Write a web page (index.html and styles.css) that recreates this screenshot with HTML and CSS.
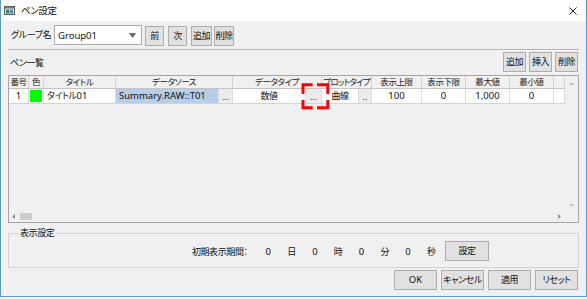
FILE: index.html
```html
<!DOCTYPE html>
<html lang="ja">
<head>
<meta charset="utf-8">
<title>ペン設定</title>
<link rel="stylesheet" href="styles.css">
</head>
<body>
<div class="window">
  <div class="titlebar">
    <svg class="app-icon" width="11" height="9" viewBox="0 0 11 9">
      <rect x="0.5" y="0.5" width="10" height="8" fill="#e4e4e4" stroke="#5a5a5a"/>
      <rect x="1" y="1" width="9" height="1.5" fill="#7a7a7a"/>
      <rect x="2" y="3.5" width="3" height="4" fill="#2f8a5a"/>
      <rect x="5.5" y="3.5" width="3.5" height="4" fill="#4a8ad0"/>
    </svg>
    <span class="title">ペン設定</span>
    <svg class="close" width="8" height="8" viewBox="0 0 8 8">
      <path d="M0.5,0.5 L7.5,7.5 M7.5,0.5 L0.5,7.5" stroke="#222" stroke-width="1" fill="none"/>
    </svg>
  </div>

  <div class="content">
    <div class="group-row">
      <span class="group-label">グループ名</span>
      <div class="combo">
        <span class="lat">Group01</span>
        <svg class="combo-arrow" width="7" height="5" viewBox="0 0 7 5"><path d="M0,0 H7 L3.5,5 Z" fill="#666"/></svg>
      </div>
      <button class="btn btn-prev">前</button>
      <button class="btn btn-next">次</button>
      <button class="btn btn-add">追加</button>
      <button class="btn btn-del">削除</button>
    </div>

    <div class="sep"></div>

    <div class="list-row">
      <span class="list-label">ペン一覧</span>
      <div class="list-btns">
        <button class="btn btn-small">追加</button>
        <button class="btn btn-small">挿入</button>
        <button class="btn btn-small">削除</button>
      </div>
    </div>

    <div class="grid">
      <div class="grid-view">
        <div class="head-row">
          <div class="hc">番号</div>
          <div class="hc">色</div>
          <div class="hc">タイトル</div>
          <div class="hc">データソース</div>
          <div class="hc">データタイプ</div>
          <div class="hc hc-tight">プロットタイプ</div>
          <div class="hc">表示上限</div>
          <div class="hc">表示下限</div>
          <div class="hc">最大値</div>
          <div class="hc">最小値</div>
          <div class="hc"></div>
        </div>
        <div class="data-row">
          <div class="dc center lat">1</div>
          <div class="dc color-cell"><div class="swatch"></div></div>
          <div class="dc left">タイトル<span class="lat">01</span></div>
          <div class="dc left selected lat">Summary.RAW::T01</div>
          <div class="dc ell">...</div>
          <div class="dc center">数値</div>
          <div class="dc ell">...</div>
          <div class="dc center">曲線</div>
          <div class="dc ell">..</div>
          <div class="dc center lat">100</div>
          <div class="dc center lat">0</div>
          <div class="dc center lat">1,000</div>
          <div class="dc center lat">0</div>
          <div class="dc"></div>
        </div>
      </div>
      <div class="vscroll">
        <svg width="5" height="3" viewBox="0 0 5 3"><path d="M0,3 L2.5,0 L5,3 Z" fill="#c2c2c2"/></svg>
        <svg width="5" height="3" viewBox="0 0 5 3"><path d="M0,0 L5,0 L2.5,3 Z" fill="#c2c2c2"/></svg>
      </div>
      <div class="hscroll">
        <svg width="3" height="5" viewBox="0 0 3 5"><path d="M3,0 L0,2.5 L3,5 Z" fill="#909090"/></svg>
        <div class="thumb"></div>
        <svg class="hs-right" width="3" height="5" viewBox="0 0 3 5"><path d="M0,0 L3,2.5 L0,5 Z" fill="#909090"/></svg>
      </div>
      <div class="corner"></div>
    </div>

    <div class="disp">
      <span class="legend">表示設定</span>
      <span class="period-label">初期表示期間：</span>
      <span class="pc lat">0</span><span class="pc">日</span>
      <span class="pc lat">0</span><span class="pc">時</span>
      <span class="pc lat">0</span><span class="pc">分</span>
      <span class="pc lat">0</span><span class="pc">秒</span>
      <button class="btn btn-set">設定</button>
    </div>

    <div class="footer">
      <button class="btn btn-foot lat">OK</button>
      <button class="btn btn-foot">キャンセル</button>
      <button class="btn btn-foot">適用</button>
      <button class="btn btn-foot">リセット</button>
    </div>
  </div>

  <svg class="annot" width="32" height="30" viewBox="0 0 32 30">
    <path d="M4,13 V3.8 H13.7 M18,3.8 H28.8 V13 M4,19 V26.8 H13.7 M18,26.8 H28.8 V19" stroke="#ff0000" stroke-width="3" fill="none"/>
  </svg>
</div>
</body>
</html>
```

FILE: styles.css
```css
* { box-sizing: border-box; }

html, body {
  margin: 0;
  padding: 0;
  background: #ffffff;
}

body {
  font-family: "Noto Sans", "Noto Sans CJK JP", sans-serif;
  font-size: 9px;
  letter-spacing: -0.4px;
  font-feature-settings: "palt";
  color: #111;
  white-space: nowrap;
}

.lat {
  font-size: 9.5px;
  letter-spacing: 0;
}

.window {
  position: relative;
  width: 587px;
  height: 297px;
  border: 1px solid #5b9bd5;
  border-top: none;
  background: #f0f0f0;
  display: flex;
  flex-direction: column;
}

.titlebar {
  height: 21px;
  background: #ffffff;
  display: flex;
  align-items: center;
  padding-left: 3px;
  flex: none;
}

.app-icon { margin-right: 6px; }

.title { font-size: 9.5px; line-height: 12px; }

.close { margin-left: auto; margin-right: 9px; }

.content {
  flex: 1;
  padding: 0 7px;
  display: flex;
  flex-direction: column;
}

.btn {
  font-family: inherit;
  font-size: 9px;
  letter-spacing: -0.4px;
  font-feature-settings: "palt";
  white-space: nowrap;
  color: #111;
  background: #e1e1e1;
  border: 1px solid #adadad;
  padding: 0;
  margin: 0;
  height: 20px;
  line-height: 18px;
  text-align: center;
  overflow: hidden;
}

.btn.lat { font-size: 9.5px; letter-spacing: 0; }

/* group row */
.group-row {
  display: flex;
  align-items: flex-start;
  margin-top: 4px;
  height: 21px;
}

.group-label {
  width: 46px;
  padding-left: 3px;
  line-height: 20px;
}

.combo {
  width: 88px;
  height: 20px;
  background: #fff;
  border: 1px solid #acacac;
  display: flex;
  align-items: center;
  padding-left: 3px;
}

.combo-arrow { margin-left: auto; margin-right: 5px; }

.btn-prev { margin-left: 3px; margin-top: 1px; width: 19px; }
.btn-next { margin-left: 4px; margin-top: 1px; width: 19px; }
.btn-add  { margin-left: 4px; margin-top: 1px; width: 21px; }
.btn-del  { margin-left: 2px; margin-top: 1px; width: 20px; }

.sep {
  margin-top: 3px;
  height: 1px;
  background: #b9b9b9;
}

/* list row */
.list-row {
  margin-top: 2px;
  height: 20px;
  display: flex;
  align-items: center;
}

.list-label { padding-left: 2px; }

.list-btns {
  margin-left: auto;
  margin-right: 1px;
  display: flex;
  gap: 3px;
}

.btn-small { width: 23px; }

/* grid */
.grid {
  margin-top: 3px;
  height: 148px;
  border: 1px solid #a5a5a5;
  display: grid;
  grid-template-columns: 1fr 13px;
  grid-template-rows: 1fr 11px;
  background: #f0f0f0;
}

.grid-view {
  grid-column: 1;
  grid-row: 1;
  overflow: hidden;
}

.head-row {
  display: grid;
  grid-template-columns: 20px 15px 72px 117px 89px 50px 50px 44px 44px 44px 11px;
  height: 13px;
}

.hc {
  border-right: 1px solid #d2d2d2;
  border-bottom: 1px solid #c4c4c4;
  background: #f0f0f0;
  text-align: center;
  font-size: 8.5px;
  letter-spacing: -0.4px;
  line-height: 12px;
  color: #222;
  overflow: hidden;
}

.hc-tight { letter-spacing: -0.8px; }

.data-row {
  display: grid;
  grid-template-columns: 20px 15px 72px 103px 14px 73px 16px 37px 13px 50px 44px 44px 44px 11px;
  height: 15px;
}

.dc {
  background: #fff;
  border-right: 1px solid #dcdcdc;
  border-bottom: 1px solid #d4d4d4;
  line-height: 14px;
  overflow: hidden;
}

.center { text-align: center; }
.left { padding-left: 3px; }

.selected { background: #b7cde8; }

.color-cell { padding: 1px; }
.swatch { width: 100%; height: 100%; background: #00ff00; }

.ell {
  background: #ececec;
  text-align: center;
  color: #333;
  font-size: 9px;
  letter-spacing: 0;
  line-height: 15px;
}

.vscroll {
  grid-column: 2;
  grid-row: 1;
  display: flex;
  flex-direction: column;
  align-items: center;
  justify-content: space-between;
  padding: 6px 1px 4px 0;
}

.hscroll {
  grid-column: 1;
  grid-row: 2;
  display: flex;
  align-items: center;
  padding-left: 3px;
  padding-right: 4px;
}

.thumb {
  margin-left: 5px;
  width: 12px;
  height: 7px;
  background: #cdcdcd;
}

.hs-right { margin-left: auto; }

.corner { grid-column: 2; grid-row: 2; }

/* display settings group box */
.disp {
  position: relative;
  margin-top: 10px;
  height: 35px;
  border: 1px solid #d3d3d3;
  display: flex;
  align-items: center;
  justify-content: flex-end;
  padding-top: 1px;
  padding-right: 89px;
}

.legend {
  position: absolute;
  left: 9px;
  top: -7px;
  padding: 0 2px;
  background: #f0f0f0;
  line-height: 12px;
}

.period-label { margin-right: 9px; }

.pc {
  width: 23.3px;
  text-align: center;
}

.btn-set {
  width: 44px;
  margin-left: 2px;
}

/* footer */
.footer {
  margin-top: 2px;
  display: flex;
  justify-content: flex-end;
  gap: 4px;
  padding-right: 1px;
}

.btn-foot { width: 43px; }

.annot {
  position: absolute;
  left: 298px;
  top: 81px;
}
```
